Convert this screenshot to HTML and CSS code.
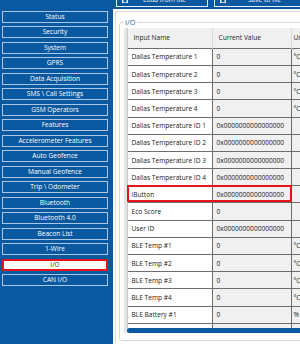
FILE: index.html
```html
<!DOCTYPE html>
<html lang="en">
<head>
  <meta charset="UTF-8">
  <title>Configurator - I/O</title>
  <link rel="stylesheet" href="styles.css">
</head>
<body>
  <div class="app">
    <nav class="sidebar">
      <button class="nav-btn">Status</button>
      <button class="nav-btn">Security</button>
      <button class="nav-btn">System</button>
      <button class="nav-btn">GPRS</button>
      <button class="nav-btn">Data Acquisition</button>
      <button class="nav-btn">SMS \ Call Settings</button>
      <button class="nav-btn">GSM Operators</button>
      <button class="nav-btn">Features</button>
      <button class="nav-btn">Accelerometer Features</button>
      <button class="nav-btn">Auto Geofence</button>
      <button class="nav-btn">Manual Geofence</button>
      <button class="nav-btn">Trip \ Odometer</button>
      <button class="nav-btn">Bluetooth</button>
      <button class="nav-btn">Bluetooth 4.0</button>
      <button class="nav-btn">Beacon List</button>
      <button class="nav-btn">1-Wire</button>
      <button class="nav-btn active">I/O</button>
      <button class="nav-btn">CAN I/O</button>
    </nav>

    <main class="main">
      <div class="toolbar">
        <button class="tool-btn load">
          <svg class="tool-icon" viewBox="0 0 8 8"><rect x="0.5" y="0.5" width="7" height="7" fill="#cfe0f2" stroke="#fff"/><rect x="2" y="4" width="4" height="3" fill="#0a58a0"/></svg>
          Load from file
        </button>
        <button class="tool-btn save">
          <svg class="tool-icon" viewBox="0 0 8 8"><rect x="0.5" y="0.5" width="7" height="7" fill="#cfe0f2" stroke="#fff"/><rect x="2" y="4" width="4" height="3" fill="#0a58a0"/></svg>
          Save to file
        </button>
      </div>

      <div class="panel">
        <div class="frame">
          <fieldset class="group">
            <legend>I/O</legend>
            <div class="grid-view">
              <table class="grid">
                <thead>
                  <tr>
                    <th class="row-head"></th>
                    <th class="col-name">Input Name</th>
                    <th class="col-value">Current Value</th>
                    <th class="col-unit">Units</th>
                  </tr>
                </thead>
                <tbody>
                  <tr><td class="row-head"></td><td>Dallas Temperature 1</td><td class="value">0</td><td class="unit">°C</td></tr>
                  <tr><td class="row-head"></td><td>Dallas Temperature 2</td><td class="value">0</td><td class="unit">°C</td></tr>
                  <tr><td class="row-head"></td><td>Dallas Temperature 3</td><td class="value">0</td><td class="unit">°C</td></tr>
                  <tr><td class="row-head"></td><td>Dallas Temperature 4</td><td class="value">0</td><td class="unit">°C</td></tr>
                  <tr><td class="row-head"></td><td>Dallas Temperature ID 1</td><td class="value">0x0000000000000000</td><td class="unit"></td></tr>
                  <tr><td class="row-head"></td><td>Dallas Temperature ID 2</td><td class="value">0x0000000000000000</td><td class="unit"></td></tr>
                  <tr><td class="row-head"></td><td>Dallas Temperature ID 3</td><td class="value">0x0000000000000000</td><td class="unit"></td></tr>
                  <tr><td class="row-head"></td><td>Dallas Temperature ID 4</td><td class="value">0x0000000000000000</td><td class="unit"></td></tr>
                  <tr class="marked"><td class="row-head"></td><td>iButton</td><td class="value">0x0000000000000000</td><td class="unit"></td></tr>
                  <tr><td class="row-head"></td><td>Eco Score</td><td class="value">0</td><td class="unit"></td></tr>
                  <tr><td class="row-head"></td><td>User ID</td><td class="value">0x0000000000000000</td><td class="unit"></td></tr>
                  <tr><td class="row-head"></td><td>BLE Temp #1</td><td class="value">0</td><td class="unit">°C</td></tr>
                  <tr><td class="row-head"></td><td>BLE Temp #2</td><td class="value">0</td><td class="unit">°C</td></tr>
                  <tr><td class="row-head"></td><td>BLE Temp #3</td><td class="value">0</td><td class="unit">°C</td></tr>
                  <tr><td class="row-head"></td><td>BLE Temp #4</td><td class="value">0</td><td class="unit">°C</td></tr>
                  <tr><td class="row-head"></td><td>BLE Battery #1</td><td class="value">0</td><td class="unit">%</td></tr>
                  <tr><td class="row-head"></td><td></td><td class="value"></td><td class="unit"></td></tr>
                </tbody>
              </table>
              <div class="scrollbar"></div>
              <div class="mark"></div>
            </div>
          </fieldset>
        </div>
      </div>
    </main>
  </div>
</body>
</html>
```

FILE: styles.css
```css
body {
  margin: 0;
  width: 300px;
  height: 344px;
  overflow: hidden;
  background-color: #0a58a0;
  font-family: "Open Sans", sans-serif;
}

.app {
  display: flex;
  height: 344px;
}

/* left menu */
.sidebar {
  width: 113px;
  flex: none;
  box-sizing: border-box;
  padding: 10.5px 0 0 2px;
  display: flex;
  flex-direction: column;
  gap: 3.5px;
}

.nav-btn {
  width: 106px;
  height: 12px;
  box-sizing: border-box;
  padding: 0;
  border: 1px solid #a9c6e4;
  background-color: #0a58a0;
  color: #fff;
  font-family: "Open Sans", sans-serif;
  font-size: 6.6px;
  line-height: 10px;
  text-align: center;
  cursor: pointer;
}

.nav-btn.active {
  background-color: #fff;
  border: 2px solid #e3141c;
  color: #333;
  line-height: 8px;
}

/* right side */
.main {
  flex: 1;
  min-width: 0;
  display: flex;
  flex-direction: column;
  overflow: hidden;
}

.toolbar {
  height: 9px;
  flex: none;
  display: flex;
  gap: 6px;
  padding-left: 3px;
  overflow: hidden;
}

.tool-btn {
  flex: none;
  height: 18px;
  margin-top: -11px;
  box-sizing: border-box;
  border: 1px solid #e8f0f8;
  background-color: #0a58a0;
  color: #fff;
  font-family: "Open Sans", sans-serif;
  font-size: 6.6px;
  padding: 0 0 0 5px;
  display: flex;
  align-items: flex-end;
  padding-bottom: 2px;
}

.tool-btn.load {
  width: 92px;
  gap: 15px;
}

.tool-btn.save {
  width: 92px;
  gap: 22px;
}

.tool-icon {
  width: 6px;
  height: 8px;
}

.panel {
  flex: 1;
  background-color: #fff;
  padding: 2px 0 0 2px;
}

.frame {
  height: 100%;
  box-sizing: border-box;
  border: 1px solid #d9d9d9;
  border-right: none;
  border-bottom: none;
  border-top-left-radius: 3px;
  padding: 5px 0 0 3px;
}

.group {
  margin: 0;
  width: 220px;
  height: 324px;
  box-sizing: border-box;
  border: 1px solid #d6d6d6;
  border-radius: 3px;
  padding: 1px 0 0 4px;
}

.group legend {
  margin-left: 0;
  padding: 0 1px;
  color: #1f5ea6;
  font-size: 7.4px;
  line-height: 10px;
}

.grid-view {
  position: relative;
  height: 305px;
  overflow: hidden;
}

.grid {
  border-collapse: collapse;
  table-layout: fixed;
  width: 210px;
  font-size: 6.6px;
  color: #222;
}

.grid th {
  height: 20.3px;
  box-sizing: border-box;
  padding: 0 0 0 6px;
  background-color: #f0f0f0;
  border-right: 1px solid #dadada;
  font-weight: normal;
  text-align: left;
  white-space: nowrap;
  overflow: hidden;
}

.grid td {
  height: 17.2px;
  box-sizing: border-box;
  padding: 0 0 0 4px;
  border-top: 1px solid #6d6d6d;
  border-right: 1px solid #6d6d6d;
  background-color: #fff;
  white-space: nowrap;
  overflow: hidden;
}

.grid .row-head {
  width: 3px;
  padding: 0;
  background-color: #e4e4e4;
  border-right: 1px solid #c9c9c9;
  border-top-color: #e4e4e4;
}

.grid .col-name {
  width: 85px;
}

.grid .col-value {
  width: 79px;
}

.grid .col-unit {
  width: 43px;
  padding-left: 2px;
}

.grid td.value {
  background-color: #f0f0f0;
}

.grid td.unit {
  background-color: #f0f0f0;
  padding-left: 2px;
}

/* red highlight round the iButton row */
.mark {
  position: absolute;
  left: 3px;
  top: 157.4px;
  width: 165px;
  height: 17px;
  box-sizing: border-box;
  border: 2px solid #e3141c;
}

.scrollbar {
  position: absolute;
  left: 3px;
  right: 0;
  bottom: 0;
  height: 5px;
  border-radius: 3px 0 0 3px;
  background-color: #0a58a0;
}
```
